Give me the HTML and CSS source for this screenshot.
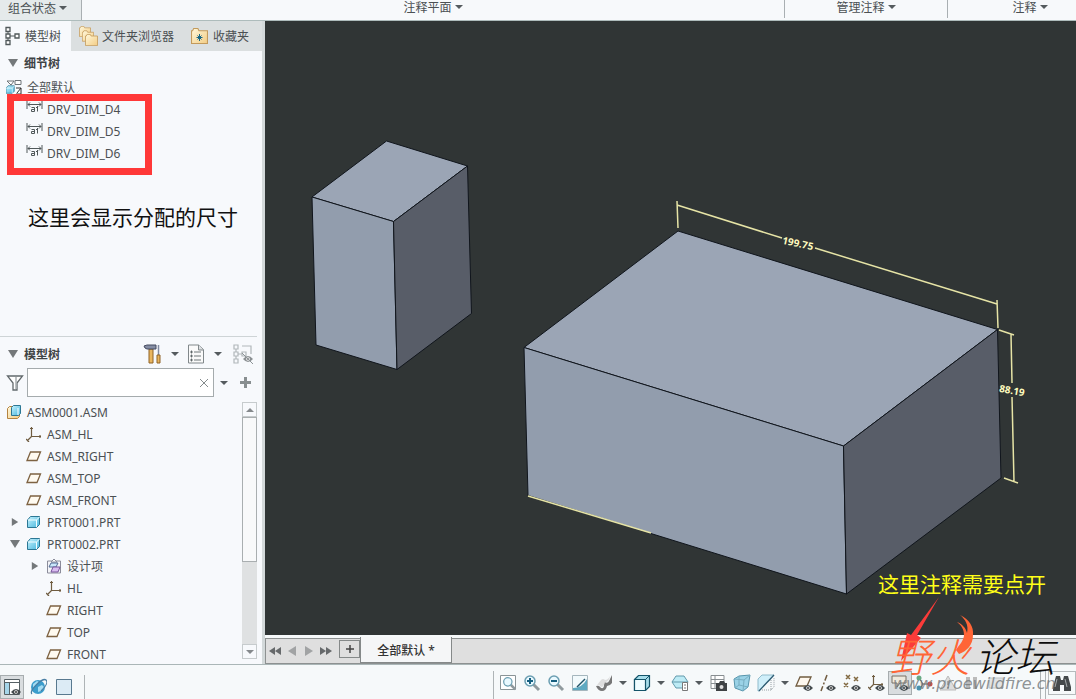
FILE: index.html
```html
<!DOCTYPE html>
<html lang="zh-CN">
<head>
    <meta charset="UTF-8">
    <meta name="viewport" content="width=device-width, initial-scale=1.0">
    <title>ASM0001</title>
    <link rel="stylesheet" href="styles.css">
</head>
<body>

<!-- Shared icons -->
<svg class="sprite" aria-hidden="true">
    <defs>
        <linearGradient id="blue" x1="0" y1="0" x2="1" y2="1">
            <stop offset="0" stop-color="#c8f4ff"/>
            <stop offset="1" stop-color="#45b5dc"/>
        </linearGradient>
        <linearGradient id="gold" x1="0" y1="0" x2="1" y2="1">
            <stop offset="0" stop-color="#fff8dc"/>
            <stop offset="1" stop-color="#f3cd85"/>
        </linearGradient>
    </defs>
    <symbol id="caret" viewBox="0 0 8 4"><path d="M0 0h8L4 4z" fill="#555b5e"/></symbol>
    <symbol id="open" viewBox="0 0 10 8"><path d="M0 0h10L5 8z" fill="#74787a"/></symbol>
    <symbol id="closed" viewBox="0 0 8 10"><path d="M0 0l8 5-8 5z" fill="#74787a"/></symbol>
    <symbol id="folder" viewBox="0 0 16 15"><path d="M.5 2.500h1l1-2h4l1 2h8v12H.5z" fill="url(#gold)" stroke="#c39a5c"/></symbol>
    <symbol id="plane" viewBox="0 0 16 16"><path d="M4.500 4h10l-3.500 8.500H1z" fill="#fffaf0" stroke="#7d6242" stroke-width="1.300"/></symbol>
    <symbol id="csys" viewBox="0 0 16 16"><path d="M5.500 1v9.500H15M5.500 10.500L1 15M4 2.500h3M14 9v3M0 13l3 3" fill="none" stroke="#6f5c40" stroke-width="1.200"/></symbol>
    <symbol id="part" viewBox="0 0 16 16"><path d="M1.500 6l3-3.500h9v8l-3 3h-9z" fill="url(#blue)" stroke="#2c7794"/><path d="M2 6h8.500v7M10.500 6l3-3" fill="none" stroke="#f2fdff"/></symbol>
    <symbol id="asm" viewBox="0 0 16 16"><path d="M1.500 4.500l2-2h3v8h7v2l-2 2h-10z" fill="url(#gold)" stroke="#b48340"/><path d="M5.500 3.500l2-2h7v8l-2 2h-7z" fill="url(#blue)" stroke="#2c7794"/><path d="M12 4v7" stroke="#fff"/></symbol>
    <symbol id="dim" viewBox="0 0 17 12"><path d="M1 0v8M16 0v8M2 3.500h13M4 1.500L2 3.500l2 2M13 1.500l2 2-2 2M5.500 6.500h3v4h-3v-2h3M11.500 5v5.500M10 6.500h1.500" fill="none" stroke="#50585a"/></symbol>
    <symbol id="eye" viewBox="0 0 10 6"><path d="M0 3q5-6 10 0-5 6-10 0z" fill="#444b4e"/><circle cx="5" cy="3" r="1.800" fill="#fff"/><circle cx="5" cy="3" r="1" fill="#333"/></symbol>
    <symbol id="lens" viewBox="0 0 18 18"><path d="M10.500 10.500l5.500 5.500" stroke="#909a9e" stroke-width="3"/><circle cx="7" cy="7" r="5" fill="#e9f9ff" stroke="#6c9fb2" stroke-width="1.500"/></symbol>
    <symbol id="note" viewBox="0 0 18 18"><path d="M1 2h14v7H9l-3 4V9H1z" fill="#eee9dd" stroke="#766e64"/></symbol>
</svg>

<div class="app">
    <header class="ribbon">
        <button class="group first">组合状态<svg class="caret"><use href="#caret"/></svg></button>
        <button class="group wide">注释平面<svg class="caret"><use href="#caret"/></svg></button>
        <button class="group manage">管理注释<svg class="caret"><use href="#caret"/></svg></button>
        <button class="group last">注释<svg class="caret"><use href="#caret"/></svg></button>
    </header>

    <div class="workspace">
        <aside class="sidebar">
            <nav class="tabs">
                <button class="tab active">
                    <svg class="icon20" viewBox="0 0 20 20"><path d="M6 6v2M6 12v2M8 10h5" stroke="#50585a"/><path d="M4 1.500h4v4H4zM4 8h4v4H4zM4 14.500h4v4H4zM13 8h4v4h-4z" fill="#fff" stroke="#50585a" stroke-width="1.300"/></svg>
                    模型树
                </button>
                <button class="tab files">
                    <svg class="icon20" viewBox="0 0 20 20"><use href="#folder" x="0" y="0" width="12" height="11"/><use href="#folder" x="3" y="4" width="12" height="12"/><use href="#folder" x="6" y="8" width="13" height="12"/></svg>
                    文件夹浏览器
                </button>
                <button class="tab">
                    <svg class="icon20" viewBox="0 0 20 20"><use href="#folder" x="1" y="2" width="17" height="16"/><path d="M9.500 8v7M6.500 11.500h6M7.500 9.500l4 4M11.500 9.500l-4 4" stroke="#166787"/></svg>
                    收藏夹
                </button>
            </nav>

            <section class="details">
                <h2><svg class="twist"><use href="#open"/></svg>细节树</h2>
                <ul class="tree">
                    <li class="row root">
                        <svg class="icon16" viewBox="0 0 16 16"><path d="M1 2h7l-3 4zM9 1.500h6v4H9z" fill="#fff" stroke="#6c7376"/><use href="#part" x="-1" y="5" width="11" height="11"/><path d="M10 9h5v6h-5M11 14l4-5" fill="#fff" stroke="#333"/></svg>
                        全部默认
                    </li>
                    <li class="row dim"><svg class="dim-icon"><use href="#dim"/></svg>DRV_DIM_D4</li>
                    <li class="row dim"><svg class="dim-icon"><use href="#dim"/></svg>DRV_DIM_D5</li>
                    <li class="row dim"><svg class="dim-icon"><use href="#dim"/></svg>DRV_DIM_D6</li>
                </ul>
                <div class="highlight"></div>
                <p class="callout">这里会显示分配的尺寸</p>
            </section>

            <section class="model">
                <div class="model-head">
                    <h2><svg class="twist"><use href="#open"/></svg>模型树</h2>
                    <button class="tool" aria-label="设置">
                        <svg class="icon20" viewBox="0 0 20 20"><path d="M6 5h4v14H6z" fill="#e9b65f" stroke="#8f6327"/><path d="M1 2l3-1h9v4H4L2 4z" fill="#858da3" stroke="#454b60"/><path d="M15.500 1v10" stroke="#828ba0" stroke-width="1.500"/><path d="M14 11h3v8h-3z" fill="#e9b65f" stroke="#8f6327"/></svg>
                    </button>
                    <button class="drop" aria-label="设置选项"><svg class="caret"><use href="#caret"/></svg></button>
                    <button class="tool" aria-label="显示">
                        <svg class="icon20" viewBox="0 0 20 20"><path d="M2.500 1h10l5 4.500V19h-15z" fill="#fafafa" stroke="#81888b"/><path d="M12.500 1v5h5" fill="#dde0e2" stroke="#81888b"/><path d="M8 8h7M8 12h7M8 16h7" stroke="#6e7679"/><path d="M5 7h1v2H5zM5 11h1v2H5zM5 15h1v2H5z" stroke="#6e7679"/></svg>
                    </button>
                    <button class="drop" aria-label="显示选项"><svg class="caret"><use href="#caret"/></svg></button>
                    <button class="tool hide" aria-label="隐藏">
                        <svg class="icon20" viewBox="0 0 20 20"><path d="M1 1h4v4H1zM1 8h4v4H1zM1 15h4v4H1zM9 8h4v4H9zM9 2h9v8M5 10h4M3 5v3M3 12v3" fill="none" stroke="#b1b7ba" stroke-width="1.200"/><use href="#eye" x="10" y="12" width="10" height="6" opacity=".6"/><path d="M9 9l11 11" stroke="#8c9396"/></svg>
                    </button>
                </div>
                <div class="search">
                    <svg class="funnel" viewBox="0 0 18 18"><path d="M1.500 2h15L11 9v7H7V9z" fill="#fff" stroke="#62696c" stroke-width="1.300"/><path d="M10 3v12" stroke="#a7adaf" stroke-width="1.500"/></svg>
                    <div class="search-box">
                        <input type="text" id="filter" aria-label="筛选">
                        <button class="clear" aria-label="清除"><svg class="clear-icon" viewBox="0 0 8 8"><path d="M0 0l8 8M8 0L0 8" stroke="#858b8d"/></svg></button>
                    </div>
                    <button class="drop" aria-label="筛选选项"><svg class="caret"><use href="#caret"/></svg></button>
                    <button class="add" aria-label="添加"><svg class="add-icon" viewBox="0 0 11 11"><path d="M5.500 0v11M0 5.500h11" stroke="#888e90" stroke-width="3"/></svg></button>
                </div>
                <div class="tree-pane">
                    <ul class="tree">
                        <li class="row root"><svg class="icon16"><use href="#asm"/></svg>ASM0001.ASM</li>
                        <li class="row child"><svg class="icon16"><use href="#csys"/></svg>ASM_HL</li>
                        <li class="row child"><svg class="icon16"><use href="#plane"/></svg>ASM_RIGHT</li>
                        <li class="row child"><svg class="icon16"><use href="#plane"/></svg>ASM_TOP</li>
                        <li class="row child"><svg class="icon16"><use href="#plane"/></svg>ASM_FRONT</li>
                        <li class="row branch"><svg class="twist"><use href="#closed"/></svg><svg class="icon16"><use href="#part"/></svg>PRT0001.PRT</li>
                        <li class="row branch"><svg class="twist"><use href="#open"/></svg><svg class="icon16"><use href="#part"/></svg>PRT0002.PRT</li>
                        <li class="row branch deep"><svg class="twist"><use href="#closed"/></svg><svg class="icon16" viewBox="0 0 16 16"><path d="M1.500 3h13v12h-13z" fill="#f3f4f8" stroke="#8b8c9a"/><path d="M5 4l3-3 3 3z" fill="#fff" stroke="#8b8c9a"/><path d="M5 5h7l-2 4H3z" fill="#c9e7fa" stroke="#536b93"/><path d="M7 9h7l-2 5H5z" fill="#d9bcf0" stroke="#77549a"/></svg>设计项</li>
                        <li class="row grandchild"><svg class="icon16"><use href="#csys"/></svg>HL</li>
                        <li class="row grandchild"><svg class="icon16"><use href="#plane"/></svg>RIGHT</li>
                        <li class="row grandchild"><svg class="icon16"><use href="#plane"/></svg>TOP</li>
                        <li class="row grandchild"><svg class="icon16"><use href="#plane"/></svg>FRONT</li>
                    </ul>
                    <div class="scrollbar">
                        <button class="scroll-btn" aria-label="向上"><svg class="scroll-icon up"><use href="#caret"/></svg></button>
                        <div class="thumb"></div>
                        <div class="track"></div>
                        <button class="scroll-btn" aria-label="向下"><svg class="scroll-icon"><use href="#caret"/></svg></button>
                    </div>
                </div>
            </section>
        </aside>

        <main class="main">
            <div class="viewport">
                <svg class="scene" viewBox="265 21 811 614" preserveAspectRatio="xMinYMin meet">
                    <g stroke="#10151c" stroke-linejoin="round">
                        <path d="M386.500 141L467.500 166 393.500 221.500 312 197z" fill="#9ba5b5"/>
                        <path d="M312 197l81.500 24.500L397 369.500 316 345z" fill="#929dad"/>
                        <path d="M393.500 221.500L467.500 166l4 147.500-74.500 56z" fill="#585d68"/>
                        <path d="M678 231l319.500 98.500L843.500 446 524 347.500z" fill="#9ba5b5"/>
                        <path d="M524 347.500L843.500 446l3 148L528 495.500z" fill="#929dad"/>
                        <path d="M843.500 446l154-116.500 3.500 148.500-154.500 116z" fill="#585d68"/>
                    </g>
                    <!-- Dimensions -->
                    <path d="M677 201l1 27M677 205l105 33M815 248l182 56M997 300l1 28M999 330l15 5M1011 334l1 49M1012 397l2 85M1004 478l14 5M528 496l123 37" fill="none" stroke="#e6e4a6" stroke-width="1.500"/>
                    <text class="measure" x="798" y="247" transform="rotate(12 798 243)">199.75</text>
                    <text class="measure" x="1012" y="394" transform="rotate(10 1012 390)">88.19</text>
                </svg>
            </div>
            <div class="sheets">
                <button class="nav-btn" aria-label="第一个"><svg class="nav-icon" viewBox="0 0 12 10"><path d="M6 1v8L0 5zM12 1v8L6 5z" fill="#66696b"/></svg></button>
                <button class="nav-btn" aria-label="上一个"><svg class="nav-icon" viewBox="0 0 12 10"><path d="M10 0v10L2 5z" fill="#a1a3a4"/></svg></button>
                <button class="nav-btn" aria-label="下一个"><svg class="nav-icon" viewBox="0 0 12 10"><path d="M2 0v10l8-5z" fill="#a1a3a4"/></svg></button>
                <button class="nav-btn" aria-label="最后一个"><svg class="nav-icon" viewBox="0 0 12 10"><path d="M0 1v8l6-4zM6 1v8l6-4z" fill="#66696b"/></svg></button>
                <button class="new-sheet" aria-label="新建"><svg class="plus" viewBox="0 0 8 8"><path d="M4 0v8M0 4h8" stroke="#444" stroke-width="1.500"/></svg></button>
                <button class="sheet">全部默认 *</button>
            </div>
        </main>
    </div>

    <footer class="status">
        <div class="status-left">
            <button class="btn pressed" aria-label="导航器"><svg class="icon18" viewBox="0 0 18 18"><path d="M1.500 1.500h15v15h-15z" fill="#fff" stroke="#566064"/><path d="M2 4.500h14M6.500 5v11" stroke="#566064"/><path d="M2 5h4v11H2z" fill="#a5d5e9"/><use href="#eye" x="8" y="11" width="10" height="6"/></svg></button>
            <button class="btn" aria-label="浏览器"><svg class="icon18" viewBox="0 0 18 18"><circle cx="9" cy="9" r="7" fill="#3c9dcc"/><path d="M4 6l4-3 2 1-3 3-3 3zM9 9l4-2 2 2-3 4-3 1z" fill="#a4dcf2"/><path d="M3 16C-1 13 14-1 17 2s-2 8-5 11" fill="none" stroke="#4a7fa4" stroke-width="1.200"/></svg></button>
            <button class="btn" aria-label="全屏"><svg class="icon18" viewBox="0 0 18 18"><path d="M1.500 1.500h15v15h-15z" fill="#dcebf5" stroke="#58798f"/></svg></button>
        </div>
        <div class="toolbar">
            <button class="btn" aria-label="重新调整"><svg class="icon18" viewBox="0 0 18 18"><path d="M1.500 1.500h15v14h-15z" fill="#fff" stroke="#8a9497"/><use href="#lens" x="3" y="2" width="15" height="15"/></svg></button>
            <button class="btn" aria-label="放大"><svg class="icon18" viewBox="0 0 18 18"><use href="#lens"/><path d="M4 7h6M7 4v6" stroke="#155f80" stroke-width="2"/></svg></button>
            <button class="btn" aria-label="缩小"><svg class="icon18" viewBox="0 0 18 18"><use href="#lens"/><path d="M4 7h6" stroke="#155f80" stroke-width="2"/></svg></button>
            <button class="btn" aria-label="重画"><svg class="icon18" viewBox="0 0 18 18"><path d="M1.500 1.500h15v15h-15z" fill="#f2fafc" stroke="#a5b6bd"/><path d="M2 14q9 0 14-9v11H2z" fill="#5fa9c1"/><path d="M6 13L14 5" stroke="#215469" stroke-width="1.500"/></svg></button>
            <button class="btn" aria-label="渲染"><svg class="icon18" viewBox="0 0 18 18"><path d="M1 12q3-1 4 1 3 3 4-1V8q4 2 5-1l3-6v8q-2 3-5 3-1 5-5 5-4 0-6-5z" fill="#777"/><path d="M2 11l4-5q2-2 4 0 3 0 5-4-1 6-5 6-1 5-4 5-2-3-4-2z" fill="#ddd"/></svg></button>
            <button class="drop" aria-label="渲染选项"><svg class="caret"><use href="#caret"/></svg></button>
            <button class="btn" aria-label="显示样式"><svg class="icon18" viewBox="0 0 18 18"><path d="M1.500 5.500l4-4h11v11l-4 4h-11z" fill="#a6ddea" stroke="#145469" stroke-width="1.200"/><path d="M1.500 5.500h11v11h-11z" fill="#effcff" stroke="#145469" stroke-width="1.200"/><path d="M12.500 5.500l4-4" stroke="#145469"/></svg></button>
            <button class="drop" aria-label="显示样式选项"><svg class="caret"><use href="#caret"/></svg></button>
            <button class="btn" aria-label="已保存方向"><svg class="icon18" viewBox="0 0 18 18"><path d="M1 8l4-6h8l4 6-4 6H5z" fill="#bdebf5" stroke="#6299ab"/><path d="M1 8h16" fill="none" stroke="#6299ab"/><path d="M11.500 8.500h5v8h-5z" fill="#fff" stroke="#787878"/><path d="M13 11h2M13 14h2" stroke="#777"/></svg></button>
            <button class="drop" aria-label="方向选项"><svg class="caret"><use href="#caret"/></svg></button>
            <button class="btn" aria-label="视图管理器"><svg class="icon18" viewBox="0 0 18 18"><path d="M2 1.500h13v13H2zM2 5.500h13M2 9.500h13M6 1v14" fill="#fff" stroke="#888e91"/><path d="M7 9h3l1-2h4l1 2h2v8H7z" fill="#3e4244"/><circle cx="12.500" cy="13" r="2" fill="#ddd"/></svg></button>
            <button class="btn" aria-label="透视图"><svg class="icon18" viewBox="0 0 18 18"><path d="M1 5l5-3 11-1-2 12-5 4-8-3z" fill="#9ad2e6" stroke="#5795ac"/><path d="M1 5l10 1-1 11M11 6l6-5M6 2v9l9 2M6 11l-4 3" fill="none" stroke="#77aec2"/></svg></button>
            <button class="btn" aria-label="截面"><svg class="icon18" viewBox="0 0 18 18"><path d="M1 5l4-4h12L2 17H1z" fill="#cfeffa" stroke="#91bccc"/><path d="M2 17L17 1" stroke="#315d73" stroke-width="1.300"/><path d="M5 16h9V6M14 16l3-3V4" fill="none" stroke="#969fa3" stroke-dasharray="1 1"/></svg></button>
            <button class="drop" aria-label="截面选项"><svg class="caret"><use href="#caret"/></svg></button>
            <button class="btn" aria-label="平面显示"><svg class="icon18" viewBox="0 0 18 18"><path d="M5 3h11l-4 9H1z" fill="#fff9ef" stroke="#725d42" stroke-width="1.300"/><use href="#eye" x="8" y="11" width="10" height="6"/></svg></button>
            <button class="btn" aria-label="轴显示"><svg class="icon18" viewBox="0 0 18 18"><path d="M8 1L2 17" stroke="#725d42" stroke-width="1.500" stroke-dasharray="6 2 2 2"/><use href="#eye" x="7" y="11" width="10" height="6"/></svg></button>
            <button class="btn" aria-label="点显示"><svg class="icon18" viewBox="0 0 18 18"><path d="M3 1l4 4M7 1L3 5M11 3l4 4M15 3l-4 4M1 9l4 4M5 9l-4 4" stroke="#80683f" stroke-width="1.500"/><use href="#eye" x="8" y="11" width="10" height="6"/></svg></button>
            <button class="btn" aria-label="坐标系显示"><svg class="icon18" viewBox="0 0 18 18"><use href="#csys" x="1" y="0" width="16" height="16"/><use href="#eye" x="8" y="11" width="10" height="6"/></svg></button>
            <button class="btn pressed" aria-label="注释显示"><svg class="icon18" viewBox="0 0 18 18"><use href="#note"/><use href="#eye" x="8" y="11" width="10" height="6"/></svg></button>
            <button class="btn" aria-label="旋转中心"><svg class="icon18" viewBox="0 0 18 18"><path d="M4 4l4 6-3 5M8 10h7" stroke="#555" fill="none"/><circle cx="4" cy="4" r="2.500" fill="#67a984"/><circle cx="4" cy="14" r="2.500" fill="#4991ad"/><circle cx="15" cy="10" r="2.500" fill="#c45151"/></svg></button>
            <button class="btn" aria-label="警告"><svg class="icon18" viewBox="0 0 18 18"><path d="M9 2l8 14H1z" fill="#ddd" stroke="#bbb"/><path d="M9 7v4M9 13v1" stroke="#aaa" stroke-width="2"/></svg></button>
            <button class="btn" aria-label="暂停"><svg class="icon18" viewBox="0 0 18 18"><path d="M3 3h4v12H3zM10 3h4v12h-4z" fill="#bbb"/></svg></button>
            <button class="btn" aria-label="窗口"><svg class="icon18" viewBox="0 0 18 18"><path d="M2 4h14v10H2z" fill="#e1e3e4" stroke="#c0c4c5"/></svg></button>
            <div class="divider"></div>
            <button class="find" aria-label="查找"><svg class="icon18" viewBox="0 0 18 18"><path d="M3 2h4l1 4h2l1-4h4l3 11v4h-7v-6H7v6H0v-4z" fill="#45494b"/><path d="M4 5L2 13M12 5l2 8" stroke="#a5a9ab"/></svg></button>
        </div>
    </footer>

    <p class="hint">这里注释需要点开</p>
    <svg class="arrow" viewBox="0 0 60 66"><path d="M48 0L26 38l4 3-20 23 6-28 4 2z" fill="#fb3b39"/></svg>
    <div class="watermark">
        <div class="brand"><span class="fire">野火</span><span>论坛</span></div>
        <svg class="flame" viewBox="0 0 20 40"><path d="M5 0C14 4 19 12 18 20 18 30 12 36 4 39L1 35C5 29 9 25 9 20 9 14 6 10 2 7 7 9 11 13 12 18 14 10 10 4 5 0z" fill="#ff6536"/></svg>
        <div class="site">www.proewildfire.cn</div>
    </div>
</div>

</body>
</html>
```
FILE: styles.css
```css
* {
    box-sizing: border-box;
}

body {
    margin: 0;
    font-family: "Noto Sans", "Noto Sans CJK SC", sans-serif;
    font-size: 12px;
    color: #4b5053;
    background: #f6f9fa;
}

button {
    display: flex;
    align-items: center;
    justify-content: center;
    flex: none;
    padding: 0;
    border: none;
    background: none;
    font: inherit;
    color: inherit;
}

svg {
    display: block;
    flex: none;
}

h2,
p,
ul {
    margin: 0;
    padding: 0;
}

.sprite {
    position: absolute;
    width: 0;
    height: 0;
}

.app {
    position: relative;
    display: flex;
    flex-direction: column;
    height: 100vh;
    overflow: hidden;
}

.caret {
    width: 8px;
    height: 4px;
}

.icon16 {
    width: 16px;
    height: 16px;
}

.icon18 {
    width: 18px;
    height: 18px;
}

.icon20 {
    width: 20px;
    height: 20px;
}

/* Ribbon */
.ribbon {
    display: flex;
    flex: none;
    height: 21px;
    border-bottom: 1px solid #aebcbc;
    background: #f7f9fb;
}

.group {
    gap: 3px;
    height: 18px;
    padding-bottom: 4px;
    border-right: 1px solid #a9afb2;
}

.group.first {
    width: 82px;
    height: 20px;
    padding-right: 6px;
    background: #e5eaeb;
}

.group.wide {
    flex: 1;
}

.group.manage {
    width: 163px;
}

.group.last {
    width: 128px;
    padding-left: 36px;
    border: none;
}

/* Sidebar */
.workspace {
    display: flex;
    flex: 1;
    min-height: 0;
}

.sidebar {
    display: flex;
    flex-direction: column;
    flex: none;
    width: 265px;
    border-right: 3px solid #d3d9da;
    background: #f7f9fc;
}

.tabs {
    display: flex;
    flex: none;
    height: 30px;
    background: #dbdfe0;
}

.tab {
    gap: 3px;
    padding: 0 8px;
}

.tab.active {
    justify-content: flex-start;
    width: 71px;
    padding: 0 2px;
    background: #f7f9fc;
}

h2 {
    display: flex;
    align-items: center;
    gap: 6px;
    height: 24px;
    padding-left: 8px;
    font-size: 12px;
    font-weight: 700;
    color: #3e4345;
}

.twist {
    width: 10px;
    height: 8px;
}

.details {
    position: relative;
    flex: 1;
    min-height: 0;
}

.tree {
    list-style: none;
}

.details .tree {
    padding-top: 1px;
}

.row {
    display: flex;
    align-items: center;
    gap: 5px;
    height: 22px;
    padding-left: 6px;
    white-space: nowrap;
}

.row.dim,
.row.child {
    padding-left: 26px;
}

.row.dim {
    gap: 4px;
}

.row.branch {
    padding-left: 10px;
}

.row.branch .twist {
    margin-right: 1px;
}

.row.deep {
    padding-left: 30px;
}

.row.grandchild {
    padding-left: 46px;
}

.dim-icon {
    width: 17px;
    height: 12px;
    margin-bottom: 4px;
}

.highlight {
    position: absolute;
    top: 43px;
    left: 7px;
    width: 145px;
    height: 81px;
    border: 7px solid #ff3838;
}

.callout {
    position: absolute;
    top: 151px;
    left: 28px;
    font-size: 21px;
    line-height: 30px;
    color: #111;
    white-space: nowrap;
}

.model {
    flex: none;
    height: 328px;
    margin: 0 5px 0 0;
    border-top: 1px solid #ced4d6;
}

.model-head {
    display: flex;
    align-items: center;
    height: 31px;
    padding: 2px 2px 0 0;
}

.model-head h2 {
    flex: 1;
}

.tool {
    width: 24px;
    height: 24px;
}

.drop {
    width: 14px;
    height: 24px;
}

.model-head .drop {
    width: 19px;
}

.tool.hide {
    margin-left: 4px;
}

.search {
    display: flex;
    align-items: center;
    height: 29px;
}

.funnel {
    width: 18px;
    height: 18px;
    margin: 0 3px 0 6px;
}

.search-box {
    display: flex;
    flex: 1;
    align-items: center;
    min-width: 0;
    height: 29px;
    border: 1px solid #a5abad;
    background: #fff;
}

.search-box input {
    flex: 1;
    min-width: 0;
    height: 24px;
    border: none;
    outline: none;
    background: none;
}

.clear {
    width: 18px;
    height: 24px;
}

.clear-icon {
    width: 8px;
    height: 8px;
}

.search .drop {
    width: 20px;
}

.add {
    width: 23px;
    height: 24px;
}

.add-icon {
    width: 11px;
    height: 11px;
}

.tree-pane {
    display: flex;
    height: 266px;
    padding-top: 4px;
}

.tree-pane .tree {
    flex: 1;
}

.scrollbar {
    display: flex;
    flex-direction: column;
    width: 15px;
    height: 257px;
    margin-top: 1px;
}

.scroll-btn {
    height: 15px;
    border: 1px solid #c6cbcd;
}

.scroll-icon {
    width: 8px;
    height: 4px;
    opacity: 0.7;
}

.scroll-icon.up {
    transform: rotate(180deg);
}

.thumb {
    height: 145px;
    border: 1px solid #a9aeb0;
    background: #f8f9fa;
}

.track {
    flex: 1;
    background: #dfe1e2;
}

/* Graphics area */
.main {
    display: flex;
    flex-direction: column;
    flex: 1;
    min-width: 0;
}

.viewport {
    flex: 1;
    min-height: 0;
    overflow: hidden;
    background: #303535;
}

.scene {
    width: 100%;
    height: 100%;
}

.measure {
    font-family: "Open Sans", sans-serif;
    font-size: 10px;
    font-weight: 700;
    text-anchor: middle;
    fill: #fffbbf;
}

.sheets {
    display: flex;
    flex: none;
    height: 26px;
    margin-top: 3px;
    border: 1px solid #8d9191;
    border-right: none;
    background: #dfdfdf;
}

.nav-btn {
    width: 17px;
    height: 24px;
}

.nav-icon {
    width: 12px;
    height: 10px;
}

.new-sheet {
    width: 21px;
    height: 18px;
    margin: 1px 0 0 5px;
    border: 1px solid #858989;
}

.plus {
    width: 8px;
    height: 8px;
}

.sheet {
    width: 92px;
    height: 26px;
    margin-top: -2px;
    border: 1px solid #858989;
    border-top: none;
    background: #f5f6f7;
    font-weight: 500;
    color: #333;
}

/* Status bar */
.status {
    display: flex;
    flex: none;
    justify-content: space-between;
    height: 35px;
    border-top: 1px solid #aab6b7;
    background: #f6f9fa;
}

.status-left,
.toolbar {
    display: flex;
}

.status-left {
    gap: 2px;
    margin-top: 10px;
    padding-right: 8px;
    border-right: 1px solid #aeb4b6;
}

.toolbar {
    width: 583px;
    height: 28px;
    margin-top: 6px;
    padding-left: 2px;
    border-left: 1px solid #aeb4b6;
}

.btn {
    width: 24px;
    height: 24px;
    border: 1px solid transparent;
}

.btn.pressed {
    border-color: #a7adaf;
    background: #d9dddf;
}

.divider {
    width: 6px;
    margin-left: auto;
    border: solid #aeb4b6;
    border-width: 0 1px;
}

.find {
    width: 28px;
    height: 24px;
    margin-left: 2px;
    border: 1px solid #b5babc;
}

/* Notes drawn over the window */
.hint {
    position: absolute;
    right: 30px;
    bottom: 100px;
    font-size: 21px;
    line-height: 30px;
    color: #ffff18;
}

.arrow {
    position: absolute;
    right: 125px;
    bottom: 36px;
    width: 60px;
    height: 66px;
}

.watermark {
    position: absolute;
    right: 16px;
    bottom: 4px;
    width: 170px;
    height: 80px;
    pointer-events: none;
}

.brand {
    display: flex;
    justify-content: space-between;
    padding: 22px 5px 0 0;
    font-family: "Noto Sans CJK SC", sans-serif;
    font-size: 40px;
    font-weight: 300;
    font-style: italic;
    line-height: 36px;
    color: #0d0d0d;
}

.fire {
    color: #ff6536;
}

.flame {
    position: absolute;
    top: 0;
    left: 65px;
    width: 20px;
    height: 40px;
}

.site {
    position: absolute;
    left: 3px;
    bottom: 2px;
    font-family: "DejaVu Sans", sans-serif;
    font-size: 16px;
    font-style: italic;
    line-height: 18px;
    color: rgba(115, 120, 122, 0.8);
}
```
